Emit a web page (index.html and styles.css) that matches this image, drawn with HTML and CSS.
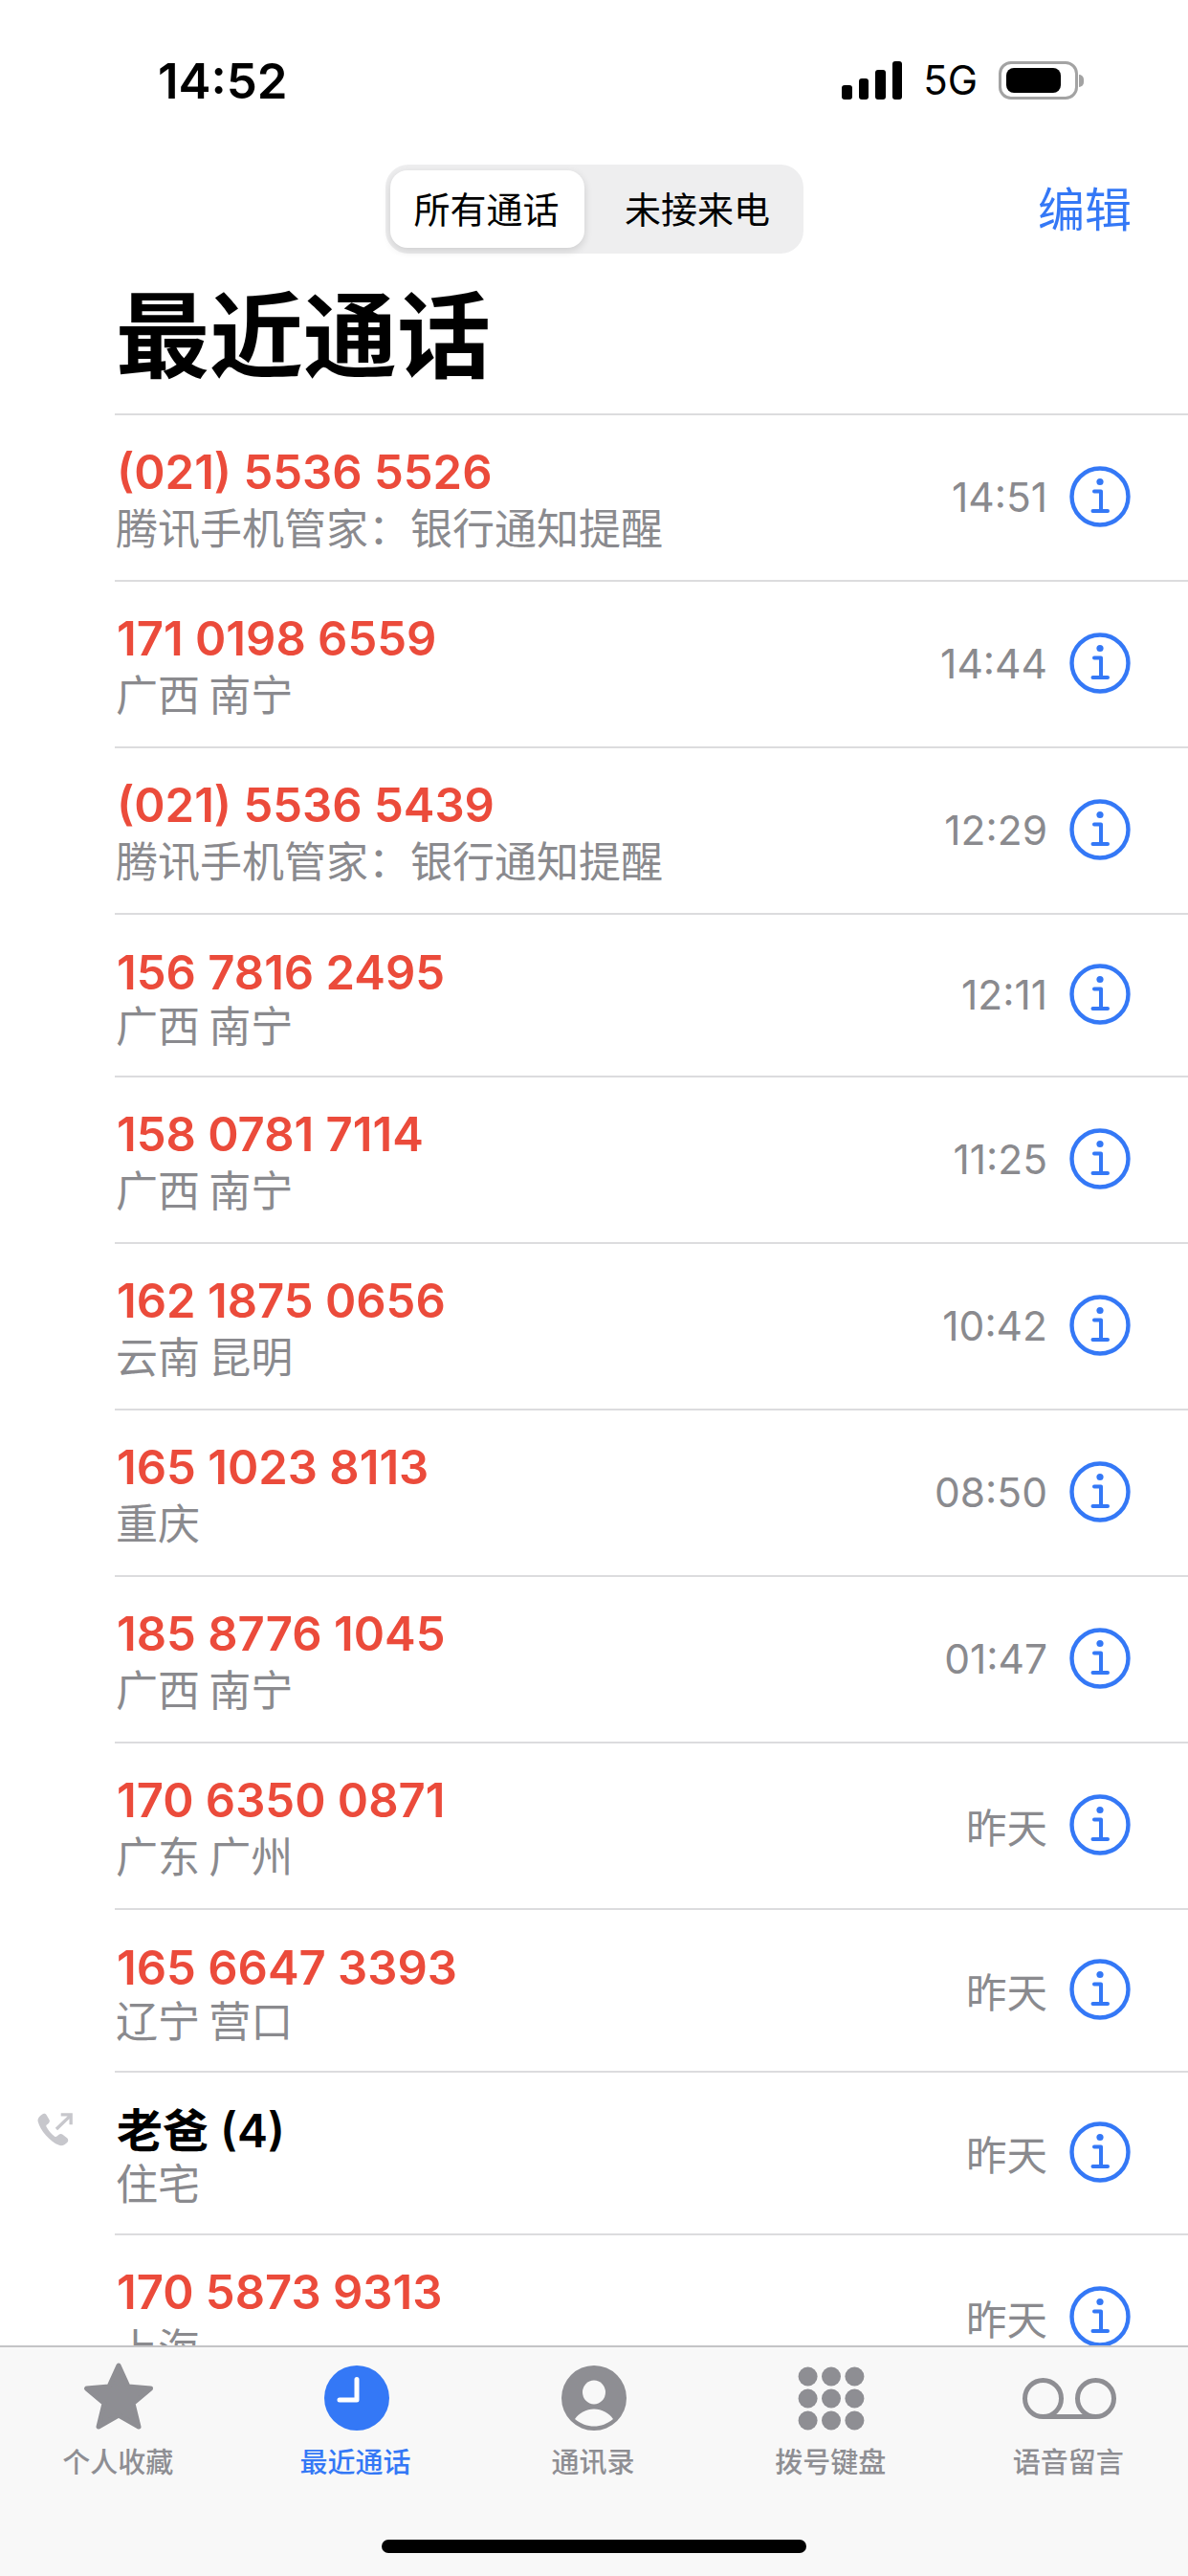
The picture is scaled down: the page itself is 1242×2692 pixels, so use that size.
FILE: index.html
```html
<!DOCTYPE html>
<html lang="zh-CN">
<head>
  <meta charset="UTF-8" />
  <title>最近通话</title>
  <link rel="stylesheet" href="styles.css">
</head>
<body>
  <svg class="defs" width="0" height="0">
    <symbol id="info" viewBox="0 0 66 66">
      <circle cx="33" cy="33" r="29.5" fill="none" stroke="currentColor" stroke-width="4.4" />
      <circle cx="33" cy="17.5" r="3.6" fill="currentColor" />
      <path d="M27 27.5h7v20M25.5 48h15.5" fill="none" stroke="currentColor" stroke-width="4" stroke-linecap="round" stroke-linejoin="round" />
    </symbol>
  </svg>

  <div class="status">
    <span class="clock">14:52</span>
    <div class="status-right">
      <div class="signal"><i class="bar1"></i><i class="bar2"></i><i class="bar3"></i><i class="bar4"></i></div>
      <span class="net">5G</span>
      <div class="battery"><div class="battery-fill"></div></div>
      <div class="battery-cap"></div>
    </div>
  </div>

  <div class="nav">
    <div class="segment">
      <div class="seg seg-on">所有通话</div>
      <div class="seg seg-off">未接来电</div>
    </div>
    <div class="edit">编辑</div>
  </div>

  <h1>最近通话</h1>

  <main class="list">
    <div class="row h174"><div class="gutter"></div><div class="cell">
      <div class="who"><div class="name">(021) 5536 5526</div><div class="sub">腾讯手机管家：银行通知提醒</div></div>
      <div class="when">14:51</div><svg class="info"><use href="#info" /></svg>
    </div></div>
    <div class="row h174"><div class="gutter"></div><div class="cell">
      <div class="who"><div class="name">171 0198 6559</div><div class="sub">广西 南宁</div></div>
      <div class="when">14:44</div><svg class="info"><use href="#info" /></svg>
    </div></div>
    <div class="row h174"><div class="gutter"></div><div class="cell">
      <div class="who"><div class="name">(021) 5536 5439</div><div class="sub">腾讯手机管家：银行通知提醒</div></div>
      <div class="when">12:29</div><svg class="info"><use href="#info" /></svg>
    </div></div>
    <div class="row h170"><div class="gutter"></div><div class="cell">
      <div class="who"><div class="name">156 7816 2495</div><div class="sub">广西 南宁</div></div>
      <div class="when">12:11</div><svg class="info"><use href="#info" /></svg>
    </div></div>
    <div class="row h174"><div class="gutter"></div><div class="cell">
      <div class="who"><div class="name">158 0781 7114</div><div class="sub">广西 南宁</div></div>
      <div class="when">11:25</div><svg class="info"><use href="#info" /></svg>
    </div></div>
    <div class="row h174"><div class="gutter"></div><div class="cell">
      <div class="who"><div class="name">162 1875 0656</div><div class="sub">云南 昆明</div></div>
      <div class="when">10:42</div><svg class="info"><use href="#info" /></svg>
    </div></div>
    <div class="row h174"><div class="gutter"></div><div class="cell">
      <div class="who"><div class="name">165 1023 8113</div><div class="sub">重庆</div></div>
      <div class="when">08:50</div><svg class="info"><use href="#info" /></svg>
    </div></div>
    <div class="row h174"><div class="gutter"></div><div class="cell">
      <div class="who"><div class="name">185 8776 1045</div><div class="sub">广西 南宁</div></div>
      <div class="when">01:47</div><svg class="info"><use href="#info" /></svg>
    </div></div>
    <div class="row h174"><div class="gutter"></div><div class="cell">
      <div class="who"><div class="name">170 6350 0871</div><div class="sub">广东 广州</div></div>
      <div class="when">昨天</div><svg class="info"><use href="#info" /></svg>
    </div></div>
    <div class="row h170"><div class="gutter"></div><div class="cell">
      <div class="who"><div class="name">165 6647 3393</div><div class="sub">辽宁 营口</div></div>
      <div class="when">昨天</div><svg class="info"><use href="#info" /></svg>
    </div></div>
    <div class="row h170"><div class="gutter">
      <svg class="outgoing" viewBox="0 0 40 40">
        <path d="M5.5 2.5c1.500-1 3.500-.8 4.600 1l3 5c.8 1.400.5 3-.7 4l-2 1.700c-.7.600-.8 1.400-.4 2.200 2 4 5.300 8 9.200 10.600.8.500 1.600.4 2.300-.2l2.200-1.800c1.200-1 3-1 4.300 0l4.700 3.700c1.500 1.200 1.700 3.300.4 4.700-2.300 2.500-5.600 4.300-9 3.300C14 33 3 20 .7 10.500-.2 7.500 2.700 4 5.500 2.500z" />
        <path class="arrow" d="M21 19L37 3.500M26 3h11v11" />
      </svg>
    </div><div class="cell">
      <div class="who"><div class="name name-known">老爸 (4)</div><div class="sub">住宅</div></div>
      <div class="when">昨天</div><svg class="info"><use href="#info" /></svg>
    </div></div>
    <div class="row h174"><div class="gutter"></div><div class="cell">
      <div class="who"><div class="name">170 5873 9313</div><div class="sub">上海</div></div>
      <div class="when">昨天</div><svg class="info"><use href="#info" /></svg>
    </div></div>
  </main>

  <nav class="tabbar">
    <div class="tabs">
      <div class="tab">
        <svg class="tab-icon" viewBox="0 0 80 80"><polygon class="star" points="40,6 50,28 73.500,30 55,45.500 61,70 40,58 19,70 25,45.500 6.500,30 30,28" /></svg>
        <span>个人收藏</span>
      </div>
      <div class="tab tab-on">
        <svg class="tab-icon" viewBox="0 0 80 80"><circle cx="40" cy="40" r="34" /><path class="hands" d="M40 20.500V42H22" /></svg>
        <span>最近通话</span>
      </div>
      <div class="tab">
        <svg class="tab-icon" viewBox="0 0 80 80"><circle cx="40" cy="40" r="34" /><ellipse class="cut" cx="40" cy="34" rx="12" ry="12.500" /><path class="cut" d="M20 62c4-6 12-10.500 20-10.500S56 56 60 62c-6 5-13 7.500-20 7.500S26 67 20 62z" /></svg>
        <span>通讯录</span>
      </div>
      <div class="tab">
        <svg class="tab-icon" viewBox="0 0 80 80">
          <circle cx="15.600" cy="17.500" r="10" /><circle cx="40" cy="17.500" r="10" /><circle cx="64.400" cy="17.500" r="10" />
          <circle cx="15.600" cy="40.500" r="10" /><circle cx="40" cy="40.500" r="10" /><circle cx="64.400" cy="40.500" r="10" />
          <circle cx="15.600" cy="63.500" r="10" /><circle cx="40" cy="63.500" r="10" /><circle cx="64.400" cy="63.500" r="10" />
        </svg>
        <span>拨号键盘</span>
      </div>
      <div class="tab">
        <svg class="tab-icon tab-icon-wide" viewBox="0 0 98 43"><circle class="ring" cx="21.500" cy="21.500" r="19" /><circle class="ring" cx="76.500" cy="21.500" r="19" /><path class="ring" d="M21.500 40.500h55" /></svg>
        <span>语音留言</span>
      </div>
    </div>
    <div class="home-bar"></div>
  </nav>
</body>
</html>
```

FILE: styles.css
```css
* {
  box-sizing: border-box;
}
html, body {
  margin: 0;
  height: 100%;
}
body {
  display: flex;
  flex-direction: column;
  width: 1242px;
  height: 2692px;
  overflow: hidden;
  background: #fff;
  color: #000;
  font-family: Inter, "Noto Sans CJK SC", sans-serif;
}
.defs {
  display: none;
}

/* status bar */
.status {
  flex: none;
  display: flex;
  justify-content: space-between;
  align-items: center;
  height: 168px;
  padding: 0 109px 0 165px;
}
.clock {
  font-size: 51px;
  font-weight: 600;
}
.status-right {
  display: flex;
  align-items: center;
}
.signal {
  display: flex;
  align-items: flex-end;
  gap: 7px;
  height: 40px;
  margin-right: 22px;
}
.signal i {
  display: block;
  width: 10.500px;
  background: #000;
  border-radius: 3px;
}
.bar1 { height: 15px; }
.bar2 { height: 22px; }
.bar3 { height: 31px; }
.bar4 { height: 40px; }
.net {
  font-size: 42px;
  font-weight: 400;
  line-height: 40px;
  margin-right: 22px;
}
.battery {
  width: 83px;
  height: 40px;
  padding: 4px 15px 4px 5px;
  border: 3px solid #a3a3a3;
  border-radius: 13px;
}
.battery-fill {
  height: 100%;
  background: #000;
  border-radius: 8px;
}
.battery-cap {
  width: 5px;
  height: 13px;
  margin-left: 1px;
  background: #a3a3a3;
  border-radius: 0 5px 5px 0;
}

/* top nav */
.nav {
  flex: none;
  position: relative;
  display: flex;
  justify-content: center;
  height: 93px;
  margin-top: 4px;
}
.segment {
  display: flex;
  width: 437px;
  margin-left: 1px;
  padding: 6px 5px;
  background: #eeeeef;
  border-radius: 24px;
}
.seg {
  flex: 1;
  display: flex;
  align-items: center;
  justify-content: center;
  padding-bottom: 4px;
  font-size: 38px;
  border-radius: 18px;
}
.seg-on {
  flex: none;
  width: 203px;
  padding-right: 2px;
  background: #fff;
  box-shadow: 0 3px 8px rgba(0, 0, 0, 0.14);
}
.seg-off {
  padding-left: 12px;
}
.edit {
  position: absolute;
  right: 59px;
  top: 13px;
  font-size: 49px;
  line-height: 70px;
  color: #3478f6;
}
h1 {
  flex: none;
  margin: 0;
  padding: 6px 0 0 121px;
  height: 167px;
  font-size: 98px;
  font-weight: 700;
  line-height: 161px;
}

/* call list */
.list {
  flex: 1;
  min-height: 0;
  overflow: hidden;
}
.row {
  display: flex;
}
.h170 { height: 170px; }
.h174 { height: 174px; }
.gutter {
  flex: none;
  display: flex;
  align-items: center;
  justify-content: center;
  width: 120px;
  padding-right: 5px;
  padding-bottom: 46px;
}
.cell {
  flex: 1;
  display: flex;
  align-items: center;
  padding: 0 59px 2px 0;
  border-top: 2px solid #dcdcde;
}
.who {
  flex: 1;
  padding: 8px 0 0 2px;
}
.name {
  font-size: 49px;
  font-weight: 600;
  line-height: 60px;
  color: #eb4b3b;
}
.name-known {
  color: #000;
  font-size: 48px;
}
.sub {
  margin-left: -1px;
  font-size: 44px;
  line-height: 58px;
  word-spacing: -3px;
  color: #8a8a8e;
}
.h170 .sub {
  line-height: 52px;
}
.when {
  font-size: 42.500px;
  color: #8a8a8e;
  margin-right: 22px;
}
.info {
  flex: none;
  width: 66px;
  height: 66px;
  color: #3478f6;
}
.outgoing {
  width: 38px;
  height: 38px;
  fill: #c7c7cc;
}
.arrow {
  fill: none;
  stroke: #c7c7cc;
  stroke-width: 3.500;
}

/* tab bar */
.tabbar {
  flex: none;
  display: flex;
  flex-direction: column;
  height: 241px;
  background: #f8f8f8;
  border-top: 2px solid #c4c4c6;
}
.tabs {
  display: grid;
  grid-template-columns: repeat(5, 248.400px);
}
.tab {
  display: flex;
  flex-direction: column;
  align-items: center;
  font-size: 29px;
  font-weight: 500;
  color: #8e8e93;
}
.tab span {
  line-height: 40px;
  margin-top: 8px;
  margin-right: 2px;
}
.tab-icon {
  width: 80px;
  height: 80px;
  margin-top: 13px;
  fill: #8e8e93;
}
.tab-on {
  color: #3478f6;
}
.tab-on .tab-icon {
  fill: #3478f6;
}
.tab-icon-wide {
  width: 98px;
  height: 43px;
  margin: 32px 0 18px;
}
.star {
  stroke: #8e8e93;
  stroke-width: 5;
  stroke-linejoin: round;
}
.hands {
  fill: none;
  stroke: #fff;
  stroke-width: 5;
  stroke-linecap: round;
  stroke-linejoin: round;
}
.cut {
  fill: #f8f8f8;
}
.ring {
  fill: none;
  stroke: #8e8e93;
  stroke-width: 5;
}
.home-bar {
  width: 444px;
  height: 14px;
  margin: auto auto 24px;
  background: #000;
  border-radius: 7px;
}
```
